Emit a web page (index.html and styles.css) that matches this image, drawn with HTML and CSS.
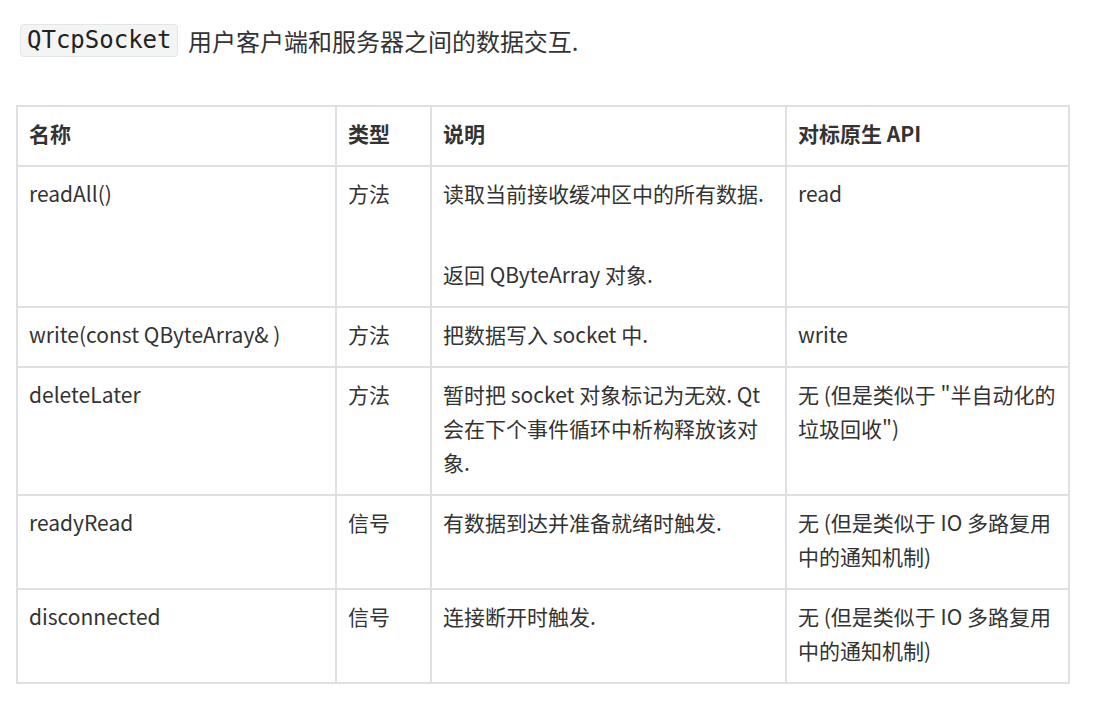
FILE: index.html
```html
<!DOCTYPE html>
<html lang="zh-CN">
<head>
<meta charset="utf-8">
<title>QTcpSocket</title>
<link rel="stylesheet" href="styles.css">
</head>
<body>
<main class="page">
  <p class="intro"><code class="code">QTcpSocket</code> 用户客户端和服务器之间的数据交互.</p>
  <table class="api">
    <colgroup>
      <col class="c-name">
      <col class="c-type">
      <col class="c-desc">
      <col class="c-native">
    </colgroup>
    <thead>
      <tr><th>名称</th><th>类型</th><th>说明</th><th>对标原生 API</th></tr>
    </thead>
    <tbody>
      <tr>
        <td>readAll()</td>
        <td>方法</td>
        <td><p class="para">读取当前接收缓冲区中的所有数据.</p><p class="para next">返回 QByteArray 对象.</p></td>
        <td>read</td>
      </tr>
      <tr>
        <td>write(const QByteArray&amp; )</td>
        <td>方法</td>
        <td>把数据写入 socket 中.</td>
        <td>write</td>
      </tr>
      <tr>
        <td>deleteLater</td>
        <td>方法</td>
        <td>暂时把 socket 对象标记为无效. Qt 会在下个事件循环中析构释放该对象.</td>
        <td>无 (但是类似于 "半自动化的垃圾回收")</td>
      </tr>
      <tr>
        <td>readyRead</td>
        <td>信号</td>
        <td>有数据到达并准备就绪时触发.</td>
        <td>无 (但是类似于 IO 多路复用中的通知机制)</td>
      </tr>
      <tr>
        <td>disconnected</td>
        <td>信号</td>
        <td>连接断开时触发.</td>
        <td>无 (但是类似于 IO 多路复用中的通知机制)</td>
      </tr>
    </tbody>
  </table>
</main>
</body>
</html>
```
FILE: styles.css
```css
html, body {
  margin: 0;
  padding: 0;
  background: #ffffff;
}
body {
  font-family: "Noto Sans CJK SC", "Noto Sans", sans-serif;
  color: #333333;
}
.page {
  padding: 24px 31px 0 16px;
}
.intro {
  margin: 0 0 48px 4px;
  font-size: 24px;
  line-height: 33px;
  height: 33px;
}
.code {
  display: inline-block;
  box-sizing: border-box;
  height: 33px;
  padding: 0 5px 0 6px;
  margin-right: 5px;
  font-family: "DejaVu Sans Mono", "Liberation Mono", monospace;
  font-size: 24px;
  line-height: 31px;
  color: #222222;
  background: #f3f4f4;
  border: 1px solid #e3e5e8;
  border-radius: 4px;
  vertical-align: top;
}
.api {
  width: 1052px;
  table-layout: fixed;
  border-collapse: separate;
  border-spacing: 0;
  border-top: 2px solid #dfe0e4;
  border-left: 2px solid #dfe0e4;
  font-size: 21px;
  line-height: 34px;
}
.c-name { width: 319px; }
.c-type { width: 95px; }
.c-desc { width: 355px; }
.c-native { width: 283px; }
.api th,
.api td {
  padding: 9px 11px 15px 11px;
  border-right: 2px solid #dfe0e4;
  border-bottom: 2px solid #dfe0e4;
  text-align: left;
  vertical-align: top;
  word-break: break-all;
}
.api th {
  font-weight: 700;
  color: #333333;
}
.para {
  margin: 0;
}
.para.next {
  margin-top: 47px;
}
```
